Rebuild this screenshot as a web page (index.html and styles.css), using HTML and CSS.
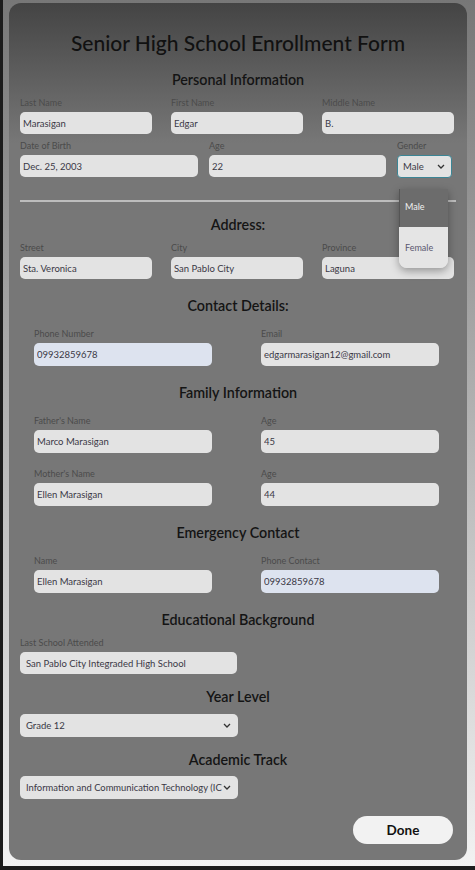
FILE: index.html
```html
<!DOCTYPE html>
<html lang="en">
<head>
  <meta charset="UTF-8">
  <meta name="viewport" content="width=device-width, initial-scale=1.0">
  <title>Senior High School Enrollment Form</title>
  <link rel="stylesheet" href="styles.css">
</head>
<body>

<!-- FORM CARD -->
<div class="card">
  <h1 class="title">Senior High School Enrollment Form</h1>

  <h2 class="heading first">Personal Information</h2>
  <div class="row three">
    <div class="field"><label>Last Name</label><input type="text" value="Marasigan"></div>
    <div class="field"><label>First Name</label><input type="text" value="Edgar"></div>
    <div class="field"><label>Middle Name</label><input type="text" value="B."></div>
  </div>
  <div class="row birth">
    <div class="field"><label>Date of Birth</label><input type="text" value="Dec. 25, 2003"></div>
    <div class="field"><label>Age</label><input type="text" value="22"></div>
    <div class="field">
      <label>Gender</label>
      <div class="select-wrap">
        <div class="select focused">
          <span>Male</span>
          <svg class="chevron" viewBox="0 0 8 5" width="8" height="5"><path d="M1 1l3 3 3-3" fill="none" stroke="#333" stroke-width="1.3"/></svg>
        </div>
        <!-- open dropdown list -->
        <ul class="dropdown">
          <li class="active">Male</li>
          <li>Female</li>
        </ul>
      </div>
    </div>
  </div>

  <hr class="divider">

  <h2 class="heading after-line">Address:</h2>
  <div class="row three">
    <div class="field"><label>Street</label><input type="text" value="Sta. Veronica"></div>
    <div class="field"><label>City</label><input type="text" value="San Pablo City"></div>
    <div class="field"><label>Province</label><input type="text" value="Laguna"></div>
  </div>

  <h2 class="heading">Contact Details:</h2>
  <div class="row two">
    <div class="field"><label>Phone Number</label><input type="text" class="autofill" value="09932859678"></div>
    <div class="field"><label>Email</label><input type="text" value="edgarmarasigan12@gmail.com"></div>
  </div>

  <h2 class="heading">Family Information</h2>
  <div class="row two">
    <div class="field"><label>Father's Name</label><input type="text" value="Marco Marasigan"></div>
    <div class="field"><label>Age</label><input type="text" value="45"></div>
  </div>
  <div class="row two next">
    <div class="field"><label>Mother's Name</label><input type="text" value="Ellen Marasigan"></div>
    <div class="field"><label>Age</label><input type="text" value="44"></div>
  </div>

  <h2 class="heading">Emergency Contact</h2>
  <div class="row two">
    <div class="field"><label>Name</label><input type="text" value="Ellen Marasigan"></div>
    <div class="field"><label>Phone Contact</label><input type="text" class="autofill" value="09932859678"></div>
  </div>

  <h2 class="heading">Educational Background</h2>
  <div class="row single">
    <div class="field"><label>Last School Attended</label><input type="text" class="padded" value="San Pablo City Integraded High School"></div>
  </div>

  <h2 class="heading small-gap">Year Level</h2>
  <div class="select wide">
    <span>Grade 12</span>
    <svg class="chevron" viewBox="0 0 8 5" width="8" height="5"><path d="M1 1l3 3 3-3" fill="none" stroke="#333" stroke-width="1.3"/></svg>
  </div>

  <h2 class="heading small-gap">Academic Track</h2>
  <div class="select wide track">
    <span>Information and Communication Technology (ICT)</span>
    <svg class="chevron" viewBox="0 0 8 5" width="8" height="5"><path d="M1 1l3 3 3-3" fill="none" stroke="#333" stroke-width="1.3"/></svg>
  </div>

  <div class="actions">
    <button class="done">Done</button>
  </div>
</div>

</body>
</html>
```

FILE: styles.css
```css
* {
  margin: 0;
  padding: 0;
  box-sizing: border-box;
}
html {
  background: #1c1c1c;
}
body {
  margin: 0 0 4px 3px;
  height: 866px;
  background: linear-gradient(to bottom, #777, #f2f2f2);
  font-family: Lato, "Open Sans", sans-serif;
  padding-top: 3px;
  overflow: hidden;
}
.card {
  margin-left: 6px;
  width: 458px;
  height: 857px;
  padding: 26px 11px 0 11px;
  border-radius: 12px;
  background: linear-gradient(to bottom, #444 0px, #777 140px, #777);
}
.title {
  font-size: 21px;
  line-height: 28px;
  font-weight: 500;
  text-align: center;
  color: #111;
}
.heading {
  font-size: 14.3px;
  line-height: 20px;
  font-weight: 600;
  text-align: center;
  color: #141414;
  margin-top: 17px;
}
.heading.first {
  margin-top: 13px;
}
.heading.after-line,
.heading.small-gap {
  margin-top: 13px;
}
/* rows of fields */
.row {
  display: grid;
  margin-top: 11px;
}
.row.three {
  grid-template-columns: 132px 132px 132px;
  column-gap: 19px;
  margin-top: 6px;
}
.row.birth {
  grid-template-columns: 178px 177px 55px;
  column-gap: 11px;
  margin-top: 5px;
}
.row.two {
  grid-template-columns: 178px 178px;
  column-gap: 49px;
  padding-left: 14px;
}
.row.two.next {
  margin-top: 14px;
}
.row.single {
  grid-template-columns: 217px;
  margin-top: 6px;
}
.field label {
  display: block;
  font-size: 9px;
  line-height: 14px;
  color: #4b4b4b;
  margin-bottom: 2px;
}
.field input {
  display: block;
  width: 100%;
  height: 22px;
  border: none;
  border-radius: 5px;
  background: #e3e3e3;
  padding: 0 3px;
  font-family: inherit;
  font-size: 9.5px;
  color: #3a3845;
  outline: none;
}
.field input.padded {
  padding-left: 6px;
}
.row.two .field input {
  height: 23px;
}
.field input.autofill {
  background: #dde3ef;
}
/* fake select boxes */
.select {
  display: flex;
  align-items: center;
  justify-content: space-between;
  height: 23px;
  padding: 0 7px 0 6px;
  border-radius: 5px;
  background: #e3e3e3;
  font-size: 9.5px;
  color: #3a3845;
}
.select.focused {
  border: 1px solid #3b8595;
  border-radius: 4px;
  padding: 0 6px 0 5px;
}
.select.wide {
  width: 218px;
  margin-top: 7px;
}
.select.track {
  margin-top: 6px;
  font-size: 9.4px;
  padding-left: 6px;
}
.select.track span {
  white-space: nowrap;
  overflow: hidden;
  width: 196px;
}
.chevron {
  flex-shrink: 0;
}
.select-wrap {
  position: relative;
}
.dropdown {
  list-style: none;
  position: absolute;
  top: 34px;
  left: 2px;
  width: 49px;
  z-index: 5;
  border-radius: 0 0 8px 8px;
  overflow: hidden;
  box-shadow: 0 3px 8px rgba(0, 0, 0, 0.35);
  font-size: 9px;
}
.dropdown li {
  height: 41px;
  line-height: 42px;
  padding-left: 6px;
  background: #e5e5e5;
  color: #5a5870;
}
.dropdown li.active {
  height: 38px;
  line-height: 36px;
  background: #6c6c6c;
  color: #f0f0f0;
  border-left: 1px solid #555;
  padding-left: 5px;
}
.divider {
  border: none;
  height: 2px;
  background: #bdbdbd;
  margin-top: 22px;
}
.actions {
  display: flex;
  justify-content: flex-end;
  margin-top: 17px;
  padding-right: 3px;
}
.done {
  width: 100px;
  height: 28px;
  border: none;
  border-radius: 14px;
  background: #f2f2f2;
  font-family: inherit;
  font-size: 13.5px;
  font-weight: 700;
  color: #111;
}
```
